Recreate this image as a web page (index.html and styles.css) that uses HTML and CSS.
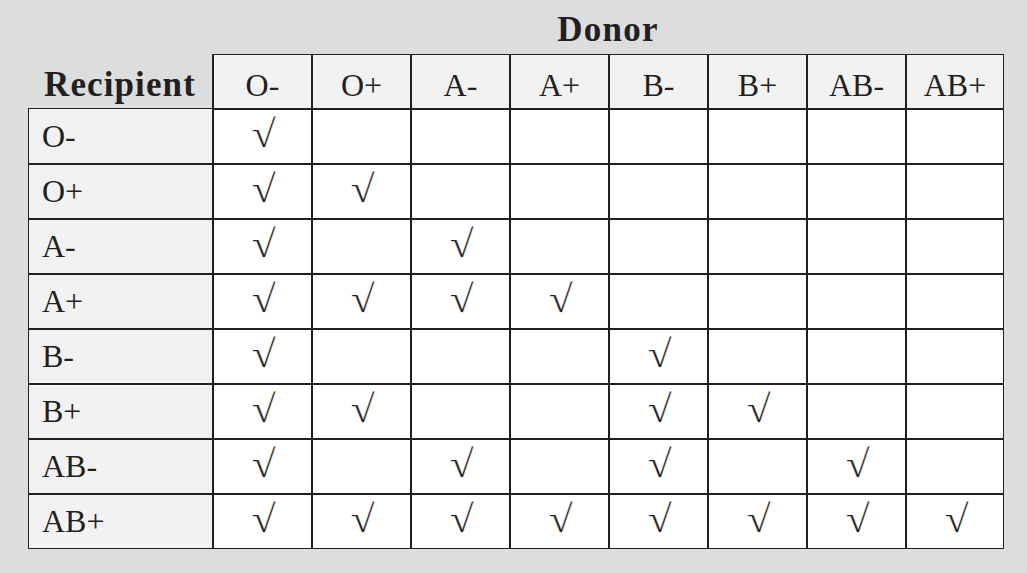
FILE: index.html
```html
<!DOCTYPE html>
<html lang="en">
<head>
<meta charset="utf-8">
<title>Blood type compatibility</title>
<link rel="stylesheet" href="styles.css">
</head>
<body>
<div class="chart">
  <div class="donor">Donor</div>

  <div class="corner">Recipient</div>
  <div class="hd">O-</div>
  <div class="hd">O+</div>
  <div class="hd">A-</div>
  <div class="hd">A+</div>
  <div class="hd">B-</div>
  <div class="hd">B+</div>
  <div class="hd">AB-</div>
  <div class="hd last-col">AB+</div>

  <div class="rl first-row">O-</div>
  <div class="c"><span class="ck">√</span></div><div class="c"></div><div class="c"></div><div class="c"></div><div class="c"></div><div class="c"></div><div class="c"></div><div class="c last-col"></div>

  <div class="rl">O+</div>
  <div class="c"><span class="ck">√</span></div><div class="c"><span class="ck">√</span></div><div class="c"></div><div class="c"></div><div class="c"></div><div class="c"></div><div class="c"></div><div class="c last-col"></div>

  <div class="rl">A-</div>
  <div class="c"><span class="ck">√</span></div><div class="c"></div><div class="c"><span class="ck">√</span></div><div class="c"></div><div class="c"></div><div class="c"></div><div class="c"></div><div class="c last-col"></div>

  <div class="rl">A+</div>
  <div class="c"><span class="ck">√</span></div><div class="c"><span class="ck">√</span></div><div class="c"><span class="ck">√</span></div><div class="c"><span class="ck">√</span></div><div class="c"></div><div class="c"></div><div class="c"></div><div class="c last-col"></div>

  <div class="rl">B-</div>
  <div class="c"><span class="ck">√</span></div><div class="c"></div><div class="c"></div><div class="c"></div><div class="c"><span class="ck">√</span></div><div class="c"></div><div class="c"></div><div class="c last-col"></div>

  <div class="rl">B+</div>
  <div class="c"><span class="ck">√</span></div><div class="c"><span class="ck">√</span></div><div class="c"></div><div class="c"></div><div class="c"><span class="ck">√</span></div><div class="c"><span class="ck">√</span></div><div class="c"></div><div class="c last-col"></div>

  <div class="rl">AB-</div>
  <div class="c"><span class="ck">√</span></div><div class="c"></div><div class="c"><span class="ck">√</span></div><div class="c"></div><div class="c"><span class="ck">√</span></div><div class="c"></div><div class="c"><span class="ck">√</span></div><div class="c last-col"></div>

  <div class="rl last-row">AB+</div>
  <div class="c last-row"><span class="ck">√</span></div><div class="c last-row"><span class="ck">√</span></div><div class="c last-row"><span class="ck">√</span></div><div class="c last-row"><span class="ck">√</span></div><div class="c last-row"><span class="ck">√</span></div><div class="c last-row"><span class="ck">√</span></div><div class="c last-row"><span class="ck">√</span></div><div class="c last-row last-col"><span class="ck">√</span></div>
</div>
</body>
</html>
```

FILE: styles.css
```css
* { box-sizing: border-box; }

html, body {
  margin: 0;
  padding: 0;
  background: #dcdddf;
}

body {
  width: 1027px;
  height: 573px;
  overflow: hidden;
  font-family: "Liberation Serif", "Times New Roman", serif;
  color: #231f20;
}

.chart {
  display: grid;
  grid-template-columns: 184px repeat(8, 99px);
  grid-template-rows: 54px 54px repeat(7, 55px) 56px;
  margin-left: 28px;
}

.donor {
  grid-column: 2 / 10;
  text-align: center;
  font-weight: bold;
  font-size: 35px;
  line-height: 35px;
  letter-spacing: 1.2px;
  padding-top: 12px;
}

.corner {
  text-align: center;
  font-weight: bold;
  font-size: 35px;
  line-height: 35px;
  letter-spacing: 1.1px;
  padding-top: 13px;
}

.hd {
  background: #f2f2f2;
  border-top: 1px solid #231f20;
  border-left: 2px solid #231f20;
  text-align: center;
  font-size: 32px;
  line-height: 32px;
  padding-top: 14px;
}

.rl {
  background: #f2f2f2;
  border-top: 2px solid #231f20;
  border-left: 1px solid #231f20;
  font-size: 32px;
  line-height: 32px;
  padding-left: 13px;
  padding-top: 10px;
}

.rl.first-row {
  border-top-width: 1px;
  padding-top: 11px;
}

.c {
  background: #ffffff;
  border-top: 2px solid #231f20;
  border-left: 2px solid #231f20;
  display: flex;
  justify-content: center;
  align-items: flex-start;
  padding-top: 4px;
  padding-left: 3px;
}

.ck {
  display: inline-block;
  font-size: 39px;
  line-height: 39px;
  transform: scaleX(1.12);
  -webkit-text-stroke: 0.3px #ffffff;
}

.last-col { border-right: 1px solid #231f20; }
.last-row { border-bottom: 1px solid #231f20; }
```
